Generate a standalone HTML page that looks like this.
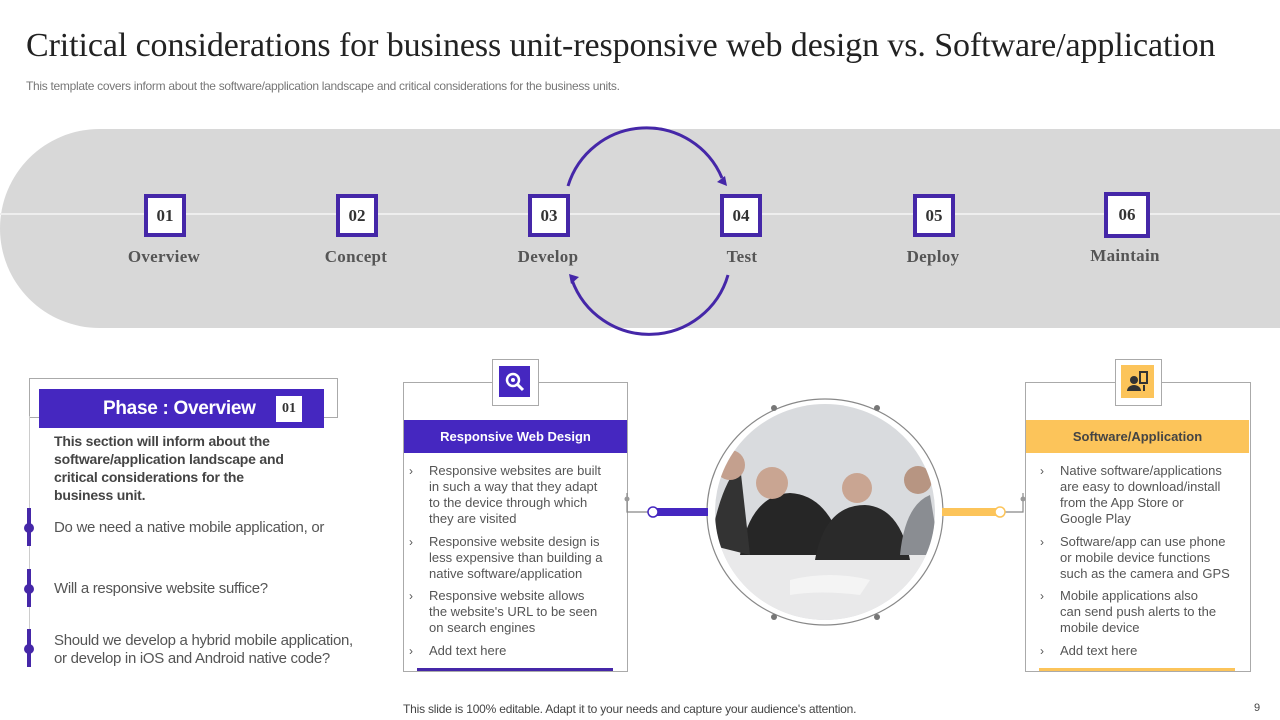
<!DOCTYPE html><html><head><style>
body{margin:0;width:1280px;height:720px;background:#fff;position:relative;overflow:hidden;font-family:"Liberation Sans",sans-serif}
.a{position:absolute}
.box{position:absolute;width:34px;height:35px;border:4px solid #4527a8;background:#fff;font:bold 17px "Liberation Serif",serif;color:#333;text-align:center;line-height:35px}
.lbl{position:absolute;width:120px;text-align:center;font:bold 17px "Liberation Serif",serif;color:#555;letter-spacing:0.3px}
.li{position:absolute;font-size:13px;color:#555;line-height:16px}
.li:before{content:"›";position:absolute;left:-20px;font-size:12px}
</style></head><body>
<div class="a" style="left:26px;top:27px;font:34px 'Liberation Serif',serif;color:#222;letter-spacing:-0.1px;white-space:nowrap">Critical considerations for business unit-responsive web design vs. Software/application</div>
<div class="a" style="left:26px;top:79px;font-size:12px;color:#777;letter-spacing:-0.3px">This template covers inform about the software/application landscape and critical considerations for the business units.</div>
<div class="a" style="left:0;top:129px;width:1380px;height:199px;background:#d8d8d8;border-radius:100px 0 0 100px"></div>
<div class="a" style="left:0;top:213px;width:1280px;height:2px;background:#eee"></div>
<svg class="a" style="left:0;top:0" width="1280" height="340"><g fill="none" stroke="#4527a8" stroke-width="3"><path d="M568 186 A82 82 0 0 1 722 178"/><path d="M728 275 A82 82 0 0 1 572 280"/></g><path d="M727 186 l-10 -4 l8 -6z" fill="#4527a8"/><path d="M569 274 l10 3 l-8 7z" fill="#4527a8"/></svg>
<div class="box" style="left:144px;top:194px">01</div><div class="lbl" style="left:104px;top:247px">Overview</div>
<div class="box" style="left:336px;top:194px">02</div><div class="lbl" style="left:296px;top:247px">Concept</div>
<div class="box" style="left:528px;top:194px">03</div><div class="lbl" style="left:488px;top:247px">Develop</div>
<div class="box" style="left:720px;top:194px">04</div><div class="lbl" style="left:682px;top:247px">Test</div>
<div class="box" style="left:913px;top:194px">05</div><div class="lbl" style="left:873px;top:247px">Deploy</div>
<div class="box" style="left:1104px;top:192px;width:38px;height:38px;line-height:38px">06</div><div class="lbl" style="left:1065px;top:246px">Maintain</div>

<div class="a" style="left:29px;top:378px;width:307px;height:38px;border:1px solid #aaa;border-left:1px solid #aaa"></div>
<div class="a" style="left:29px;top:416px;width:1px;height:250px;background:#ccc"></div>
<div class="a" style="left:39px;top:389px;width:285px;height:39px;background:#4527c0"></div>
<div class="a" style="left:103px;top:398px;font-weight:bold;font-size:19px;color:#fff;letter-spacing:-0.3px">Phase : Overview</div>
<div class="a" style="left:276px;top:396px;width:26px;height:26px;background:#fff;font:bold 14px 'Liberation Serif',serif;text-align:center;line-height:26px;color:#333">01</div>
<div class="a" style="left:54px;top:432px;width:240px;font-weight:bold;font-size:14px;line-height:18px;color:#444;letter-spacing:-0.2px">This section will inform about the software/application landscape and critical considerations for the business unit.</div>
<div class="a" style="left:27px;top:508px;width:4px;height:38px;background:#4527a8"></div><div class="a" style="left:24px;top:523px;width:10px;height:10px;border-radius:50%;background:#4527a8"></div>
<div class="a" style="left:27px;top:569px;width:4px;height:38px;background:#4527a8"></div><div class="a" style="left:24px;top:584px;width:10px;height:10px;border-radius:50%;background:#4527a8"></div>
<div class="a" style="left:27px;top:629px;width:4px;height:38px;background:#4527a8"></div><div class="a" style="left:24px;top:644px;width:10px;height:10px;border-radius:50%;background:#4527a8"></div>
<div class="a" style="left:54px;top:519px;font-size:15px;color:#555;letter-spacing:-0.3px">Do we need a native mobile application, or</div>
<div class="a" style="left:54px;top:580px;font-size:15px;color:#555;letter-spacing:-0.3px">Will a responsive website suffice?</div>
<div class="a" style="left:54px;top:632px;font-size:15px;color:#555;line-height:18px;letter-spacing:-0.3px">Should we develop a hybrid mobile application,<br>or develop in iOS and Android native code?</div>

<div class="a" style="left:403px;top:382px;width:223px;height:288px;border:1px solid #aaa"></div>
<div class="a" style="left:492px;top:359px;width:45px;height:45px;border:1px solid #aaa;background:#fff"></div>
<div class="a" style="left:499px;top:366px;width:31px;height:31px;background:#4527c0"></div>
<svg class="a" style="left:499px;top:366px" width="31" height="31"><circle cx="14" cy="14" r="6" fill="none" stroke="#fff" stroke-width="2.5"/><circle cx="14" cy="14" r="2" fill="#fff"/><path d="M18 18l6 6" stroke="#fff" stroke-width="3"/></svg>
<div class="a" style="left:404px;top:420px;width:223px;height:33px;background:#4527c0;color:#fff;font-weight:bold;font-size:13px;text-align:center;line-height:33px">Responsive  Web Design</div>
<div class="li" style="left:429px;top:463px;width:178px">Responsive websites are built in such a way that they adapt to the device through which they are visited</div>
<div class="li" style="left:429px;top:534px;width:178px">Responsive website design is less expensive than building a native software/application</div>
<div class="li" style="left:429px;top:588px;width:172px">Responsive website allows the website's URL to be seen on search engines</div>
<div class="li" style="left:429px;top:643px">Add text here</div>
<div class="a" style="left:417px;top:668px;width:196px;height:3px;background:#4527a8"></div>

<div class="a" style="left:1025px;top:382px;width:224px;height:288px;border:1px solid #aaa"></div>
<div class="a" style="left:1115px;top:359px;width:45px;height:45px;border:1px solid #aaa;background:#fff"></div>
<div class="a" style="left:1121px;top:365px;width:33px;height:33px;background:#fcc45a"></div>
<svg class="a" style="left:1121px;top:365px" width="33" height="33"><circle cx="13" cy="15" r="4" fill="#333"/><path d="M6 26a7 6 0 0 1 14 0z" fill="#333"/><rect x="19" y="7" width="7" height="11" fill="none" stroke="#333" stroke-width="2"/><path d="M23 20v6" stroke="#333" stroke-width="2"/></svg>
<div class="a" style="left:1026px;top:420px;width:223px;height:33px;background:#fcc45a;color:#444;font-weight:bold;font-size:13px;text-align:center;line-height:33px">Software/Application</div>
<div class="li" style="left:1060px;top:463px;width:168px">Native software/applications are easy to download/install from the App Store or Google Play</div>
<div class="li" style="left:1060px;top:534px;width:178px">Software/app can use phone or mobile device functions such as the camera and GPS</div>
<div class="li" style="left:1060px;top:588px;width:160px">Mobile applications also can send push alerts to the mobile device</div>
<div class="li" style="left:1060px;top:643px">Add text here</div>
<div class="a" style="left:1039px;top:668px;width:196px;height:3px;background:#fcc45a"></div>

<svg class="a" style="left:600px;top:395px" width="440" height="240">
<defs><clipPath id="c"><ellipse cx="225" cy="117" rx="110" ry="108"/></clipPath></defs>
<g fill="none" stroke="#888" stroke-width="1.2"><ellipse cx="225" cy="117" rx="118" ry="113"/><path d="M27 98v19h26M423 98v19h-26"/></g>
<g clip-path="url(#c)"><rect x="100" y="0" width="260" height="240" fill="#d9dbde"/>
<rect x="100" y="150" width="260" height="90" fill="#e9e9ea"/>
<path d="M140 160 q10-60 50-62 q40 2 55 62 z" fill="#262626"/>
<path d="M215 165 q10-55 50-55 q35 2 45 55 z" fill="#2a2a2a"/>
<path d="M110 150 q10-60 30-80 l10 90z" fill="#333"/>
<path d="M300 160 q5-50 30-60 l10 60z" fill="#8a8d92"/>
<circle cx="172" cy="88" r="16" fill="#c9a592"/><circle cx="257" cy="93" r="15" fill="#c9a592"/><circle cx="130" cy="70" r="15" fill="#c4a08e"/><circle cx="318" cy="85" r="14" fill="#b79582"/>
<path d="M190 185 q40 -10 80 0 l-10 15 q-40 -5 -70 0z" fill="#f4f4f4"/></g>
<rect x="53" y="113" width="55" height="8" fill="#4527c0"/><rect x="342" y="113" width="55" height="8" fill="#fcc45a"/>
<circle cx="53" cy="117" r="5" fill="#fff" stroke="#4527c0" stroke-width="1.5"/><circle cx="400" cy="117" r="5" fill="#fff" stroke="#fcc45a" stroke-width="1.5"/>
<circle cx="174" cy="13" r="3" fill="#777"/><circle cx="277" cy="13" r="3" fill="#777"/><circle cx="174" cy="222" r="3" fill="#777"/><circle cx="277" cy="222" r="3" fill="#777"/><circle cx="27" cy="104" r="2.5" fill="#999"/><circle cx="423" cy="104" r="2.5" fill="#999"/></svg>

<div class="a" style="left:403px;top:702px;font-size:12px;color:#444;letter-spacing:-0.2px">This slide is 100% editable. Adapt it to your needs and capture your audience's attention.</div>
<div class="a" style="left:1254px;top:702px;font-size:11px;color:#444">9</div>
</body></html>
